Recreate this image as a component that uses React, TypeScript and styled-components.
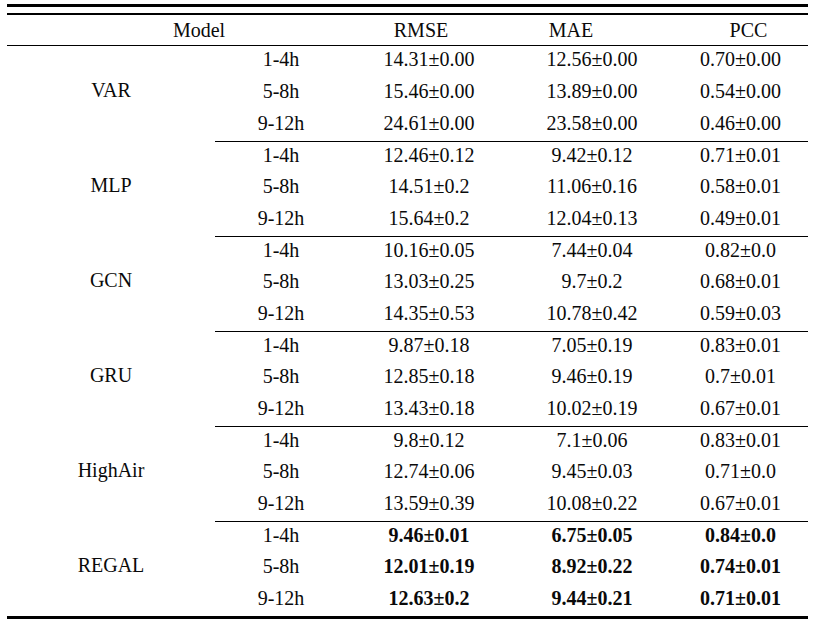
import styled, { createGlobalStyle } from 'styled-components'

const GlobalStyle = createGlobalStyle`
body {
  margin: 0;
  background: #ffffff;
}
`

type Row = { horizon: string; rmse: string; mae: string; pcc: string }
type Group = { model: string; best?: boolean; rows: Row[] }

const groups: Group[] = [
    {
        model: 'VAR',
        rows: [
            { horizon: '1-4h', rmse: '14.31±0.00', mae: '12.56±0.00', pcc: '0.70±0.00' },
            { horizon: '5-8h', rmse: '15.46±0.00', mae: '13.89±0.00', pcc: '0.54±0.00' },
            { horizon: '9-12h', rmse: '24.61±0.00', mae: '23.58±0.00', pcc: '0.46±0.00' },
        ],
    },
    {
        model: 'MLP',
        rows: [
            { horizon: '1-4h', rmse: '12.46±0.12', mae: '9.42±0.12', pcc: '0.71±0.01' },
            { horizon: '5-8h', rmse: '14.51±0.2', mae: '11.06±0.16', pcc: '0.58±0.01' },
            { horizon: '9-12h', rmse: '15.64±0.2', mae: '12.04±0.13', pcc: '0.49±0.01' },
        ],
    },
    {
        model: 'GCN',
        rows: [
            { horizon: '1-4h', rmse: '10.16±0.05', mae: '7.44±0.04', pcc: '0.82±0.0' },
            { horizon: '5-8h', rmse: '13.03±0.25', mae: '9.7±0.2', pcc: '0.68±0.01' },
            { horizon: '9-12h', rmse: '14.35±0.53', mae: '10.78±0.42', pcc: '0.59±0.03' },
        ],
    },
    {
        model: 'GRU',
        rows: [
            { horizon: '1-4h', rmse: '9.87±0.18', mae: '7.05±0.19', pcc: '0.83±0.01' },
            { horizon: '5-8h', rmse: '12.85±0.18', mae: '9.46±0.19', pcc: '0.7±0.01' },
            { horizon: '9-12h', rmse: '13.43±0.18', mae: '10.02±0.19', pcc: '0.67±0.01' },
        ],
    },
    {
        model: 'HighAir',
        rows: [
            { horizon: '1-4h', rmse: '9.8±0.12', mae: '7.1±0.06', pcc: '0.83±0.01' },
            { horizon: '5-8h', rmse: '12.74±0.06', mae: '9.45±0.03', pcc: '0.71±0.0' },
            { horizon: '9-12h', rmse: '13.59±0.39', mae: '10.08±0.22', pcc: '0.67±0.01' },
        ],
    },
    {
        model: 'REGAL',
        best: true,
        rows: [
            { horizon: '1-4h', rmse: '9.46±0.01', mae: '6.75±0.05', pcc: '0.84±0.0' },
            { horizon: '5-8h', rmse: '12.01±0.19', mae: '8.92±0.22', pcc: '0.74±0.01' },
            { horizon: '9-12h', rmse: '12.63±0.2', mae: '9.44±0.21', pcc: '0.71±0.01' },
        ],
    },
]

const App = () => {
    return (
        <Page>
            <GlobalStyle />
            <Table>
                <TopRule />
                <HeaderRow>
                    <HeadCell $w={340} $shift={22}>Model</HeadCell>
                    <HeadCell $w={164} $shift={-8}>RMSE</HeadCell>
                    <HeadCell $w={162} $shift={-21}>MAE</HeadCell>
                    <HeadCell $w={135} $shift={8}>PCC</HeadCell>
                </HeaderRow>
                {groups.map((g, i) => (
                    <GroupBlock key={g.model}>
                        <ModelCell>{g.model}</ModelCell>
                        <Rows $divided={i > 0}>
                            {g.rows.map((r) => (
                                <DataRow key={r.horizon}>
                                    <Cell $w={132}>{r.horizon}</Cell>
                                    <Cell $w={164} $bold={g.best}>{r.rmse}</Cell>
                                    <Cell $w={162} $bold={g.best}>{r.mae}</Cell>
                                    <Cell $w={135} $bold={g.best}>{r.pcc}</Cell>
                                </DataRow>
                            ))}
                        </Rows>
                    </GroupBlock>
                ))}
                <BottomRule />
            </Table>
        </Page>
    )
}

export default App

const Page = styled.div`
width: 819px;
height: 626px;
padding: 4px 0 0 7px;
box-sizing: border-box;
font-family: "Liberation Serif", "Times New Roman", serif;
font-size: 20px;
color: #0a0a0a;
`

const Table = styled.div`
width: 801px;
display: flex;
flex-direction: column;
`

const TopRule = styled.div`
height: 6px;
border-top: 3px solid #000;
border-bottom: 2px solid #000;
`

const HeaderRow = styled.div`
display: flex;
height: 30px;
border-bottom: 1px solid #000;
align-items: center;
`

// $shift moves the label's centre off the middle of its column, as in the source table
const HeadCell = styled.div<{ $w: number; $shift: number }>`
width: ${(p) => p.$w}px;
box-sizing: border-box;
text-align: center;
padding-left: ${(p) => (p.$shift > 0 ? p.$shift * 2 : 0)}px;
padding-right: ${(p) => (p.$shift < 0 ? -p.$shift * 2 : 0)}px;
`

const GroupBlock = styled.div`
display: flex;
height: 95px;
`

const ModelCell = styled.div`
width: 208px;
display: flex;
align-items: center;
justify-content: center;
padding-bottom: 6px;
box-sizing: border-box;
`

const Rows = styled.div<{ $divided: boolean }>`
flex: 1;
display: flex;
flex-direction: column;
box-sizing: border-box;
border-top: ${(p) => (p.$divided ? '1px solid #000' : 'none')};
`

const DataRow = styled.div`
flex: 1;
display: flex;
align-items: center;
padding-bottom: 4px;
`

const Cell = styled.div<{ $w: number; $bold?: boolean }>`
width: ${(p) => p.$w}px;
text-align: center;
font-weight: ${(p) => (p.$bold ? 700 : 400)};
`

const BottomRule = styled.div`
height: 0;
border-top: 3px solid #000;
`
